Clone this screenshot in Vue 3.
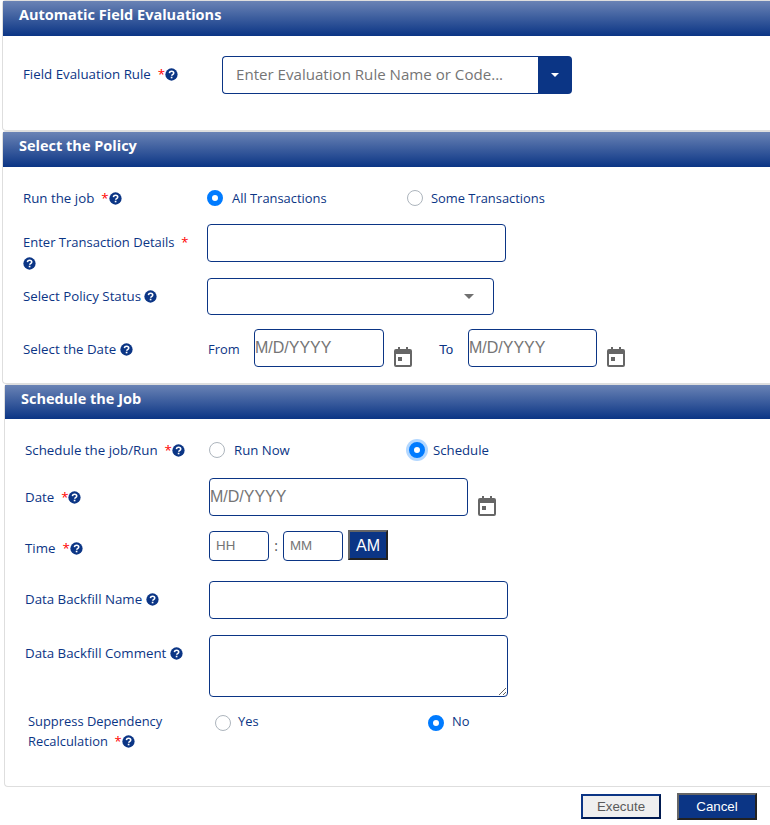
<template>
  <div class="page">
    <!-- shared icons -->
    <svg class="defs" width="0" height="0" aria-hidden="true">
      <symbol id="help" viewBox="0 0 14 14">
        <circle cx="7" cy="7" r="6.6" fill="#0b3585" />
        <path d="M4.7 5.4C4.9 4.2 5.8 3.5 7.1 3.5c1.3 0 2.3.8 2.3 1.9 0 .9-.5 1.3-1.2 1.7-.6.4-.9.7-.9 1.3" fill="none" stroke="#fff" stroke-width="1.7" />
        <rect x="6.2" y="9.4" width="1.8" height="1.7" fill="#fff" />
      </symbol>
      <symbol id="cal" viewBox="0 0 18 20">
        <path d="M4 0h2v2h6V0h2v2h2a2 2 0 0 1 2 2v14a2 2 0 0 1-2 2H2a2 2 0 0 1-2-2V4a2 2 0 0 1 2-2h2z M2 7v11h14V7z" fill="#666" fill-rule="evenodd" />
        <rect x="4" y="10" width="4" height="4" fill="#666" />
      </symbol>
    </svg>

    <!-- Automatic Field Evaluations -->
    <section class="card card-one">
      <h2 class="card-title">Automatic Field Evaluations</h2>
      <div class="card-body">
        <div class="row row-center">
          <label class="label label-rule">Field Evaluation Rule&nbsp; <span class="req">*</span><svg class="help"><use href="#help" /></svg></label>
          <div class="combo">
            <input class="combo-input" type="text" placeholder="Enter Evaluation Rule Name or Code..." />
            <span class="combo-btn"><i class="caret"></i></span>
          </div>
        </div>
      </div>
    </section>

    <!-- Select the Policy -->
    <section class="card card-two">
      <h2 class="card-title">Select the Policy</h2>
      <div class="card-body">
        <div class="row row-center radio-row">
          <label class="label label-policy">Run the job&nbsp; <span class="req">*</span><svg class="help"><use href="#help" /></svg></label>
          <span class="radio-opt opt-wide"><i class="radio on"></i>All Transactions</span>
          <span class="radio-opt"><i class="radio tight"></i>Some Transactions</span>
        </div>
        <div class="row row-details">
          <label class="label label-policy label-wrap">Enter Transaction Details&nbsp; <span class="req">*</span> <svg class="help"><use href="#help" /></svg></label>
          <input class="field field-details" type="text" />
        </div>
        <div class="row row-center row-status">
          <label class="label label-policy">Select Policy Status <svg class="help"><use href="#help" /></svg></label>
          <div class="field select-box"><i class="caret caret-grey"></i></div>
        </div>
        <div class="row row-center row-dates">
          <label class="label label-policy">Select the Date <svg class="help"><use href="#help" /></svg></label>
          <span class="from">From</span>
          <input class="field date date-small" type="text" placeholder="M/D/YYYY" />
          <svg class="cal"><use href="#cal" /></svg>
          <span class="to">To</span>
          <input class="field date date-to" type="text" placeholder="M/D/YYYY" />
          <svg class="cal"><use href="#cal" /></svg>
        </div>
      </div>
    </section>

    <!-- Schedule the Job -->
    <section class="card card-three">
      <h2 class="card-title">Schedule the Job</h2>
      <div class="card-body">
        <div class="row row-center radio-row">
          <label class="label label-job">Schedule the job/Run&nbsp; <span class="req">*</span><svg class="help"><use href="#help" /></svg></label>
          <span class="radio-opt opt-wide opt-job"><i class="radio"></i>Run Now</span>
          <span class="radio-opt opt-job"><i class="radio on focus"></i>Schedule</span>
        </div>
        <div class="row row-center row-date">
          <label class="label label-job">Date&nbsp; <span class="req">*</span><svg class="help"><use href="#help" /></svg></label>
          <input class="field date date-large" type="text" placeholder="M/D/YYYY" />
          <svg class="cal"><use href="#cal" /></svg>
        </div>
        <div class="row row-time">
          <label class="label label-job label-time">Time&nbsp; <span class="req">*</span><svg class="help"><use href="#help" /></svg></label>
          <input class="field time" type="text" placeholder="HH" />
          <span class="colon">:</span>
          <input class="field time" type="text" placeholder="MM" />
          <button class="btn-am" type="button">AM</button>
        </div>
        <div class="row row-center row-name">
          <label class="label label-job label-name">Data Backfill Name <svg class="help"><use href="#help" /></svg></label>
          <input class="field field-name" type="text" />
        </div>
        <div class="row row-comment">
          <label class="label label-job label-comment">Data Backfill Comment <svg class="help"><use href="#help" /></svg></label>
          <textarea class="field comment"></textarea>
        </div>
        <div class="row row-suppress">
          <div class="label label-suppress">
            <span class="line">Suppress Dependency</span>
            <span class="line">Recalculation&nbsp; <span class="req">*</span><svg class="help"><use href="#help" /></svg></span>
          </div>
          <span class="radio-opt opt-yes"><i class="radio"></i>Yes</span>
          <span class="radio-opt"><i class="radio on tight"></i>No</span>
        </div>
      </div>
    </section>

    <div class="actions">
      <button class="btn-execute" type="button">Execute</button>
      <button class="btn-cancel" type="button">Cancel</button>
    </div>
  </div>
</template>

<script setup>
</script>

<style>
html,
body {
  margin: 0;
  background: #fff;
  overflow: hidden;
}
</style>

<style scoped>
.page {
  width: 770px;
  height: 825px;
  overflow: hidden;
  font-family: "Open Sans", "Noto Sans", sans-serif;
  font-size: 12.9px;
  color: #0b3585;
}

.defs {
  position: absolute;
}

/* --- Cards --- */
.card {
  box-sizing: border-box;
  border: 1px solid #dedede;
  border-right: none;
  border-radius: 4px 0 0 4px;
}

.card-one {
  margin-left: 2px;
  height: 131px;
}

.card-two {
  margin-left: 2px;
  height: 253px;
}

.card-three {
  margin-left: 4px;
  height: 403px;
}

.card-title {
  margin: 0;
  height: 35px;
  box-sizing: border-box;
  padding: 4px 0 0 16px;
  font-size: 14.5px;
  line-height: 19px;
  font-weight: 700;
  color: #fff;
  background: linear-gradient(#6a83b5, #0b3585);
}

.card-three .card-title {
  height: 34px;
}

.card-body {
  padding: 20px 0 0 20px;
}

/* --- Rows --- */
.row {
  display: flex;
}

.row-center {
  align-items: center;
}

.label {
  display: block;
  flex: none;
  line-height: 21px;
  font-size: 13.3px;
}

.label-rule {
  width: 199px;
  padding-bottom: 2px;
}

.label-policy {
  width: 184px;
}

.label-job {
  width: 184px;
}

.label-wrap {
  padding-top: 8px;
  padding-right: 10px;
  box-sizing: border-box;
  font-size: 13px;
}

.label-name {
  padding-bottom: 2px;
}

.req {
  color: #f00;
}

.help {
  width: 13px;
  height: 13px;
  vertical-align: -2px;
}

.radio-row {
  height: 22px;
}

.radio-opt {
  display: flex;
  align-items: center;
  line-height: 21px;
}

.opt-wide {
  width: 200px;
}

.opt-job {
  font-size: 13.2px;
}

.radio {
  box-sizing: border-box;
  width: 16px;
  height: 16px;
  margin-right: 9px;
  border: 1px solid #adb5bd;
  border-radius: 50%;
  background: #fff;
}

.radio.tight {
  margin-right: 8px;
}

.radio.on {
  border: 5px solid #007bff;
}

.radio.focus {
  box-shadow: 0 0 0 3px rgba(0, 123, 255, 0.3);
  margin-right: 8px;
}

/* --- Inputs --- */
.field {
  box-sizing: border-box;
  height: 38px;
  padding: 0;
  border: 1px solid #0b3585;
  border-radius: 4px;
  background: #fff;
  outline: none;
}

input::placeholder {
  color: #757575;
  opacity: 1;
}

.combo {
  display: flex;
  width: 350px;
  height: 38px;
}

.combo-input {
  flex: 1;
  min-width: 0;
  box-sizing: border-box;
  padding: 0 13px 2px;
  border: 1px solid #0b3585;
  border-right: none;
  border-radius: 4px 0 0 4px;
  font-family: inherit;
  font-size: 15.1px;
  outline: none;
}

.combo-btn {
  display: flex;
  width: 34px;
  align-items: center;
  justify-content: center;
  background: #0b3585;
  border-radius: 0 4px 4px 0;
}

.caret {
  width: 0;
  height: 0;
  border-left: 4px solid transparent;
  border-right: 4px solid transparent;
  border-top: 4px solid #fff;
}

.caret-grey {
  border-left-width: 5px;
  border-right-width: 5px;
  border-top: 5px solid #707070;
}

.row-details {
  margin-top: 15px;
}

.field-details {
  width: 299px;
}

.row-status {
  margin-top: 4px;
}

.select-box {
  display: flex;
  align-items: center;
  justify-content: flex-end;
  width: 287px;
  height: 37px;
  padding-right: 19px;
}

.row-dates {
  margin-top: 14px;
}

.row-dates .label {
  padding-top: 2px;
}

.from {
  width: 46px;
  padding: 2px 0 0 1px;
}

.to {
  width: 29px;
  margin-left: 27px;
  padding-top: 2px;
  font-family: "Liberation Sans", sans-serif;
  font-size: 13.33px;
}

.date {
  padding: 0;
  font-family: "Liberation Sans", sans-serif;
  font-size: 16px;
}

.date-small {
  width: 130px;
}

.date-to {
  width: 129px;
}

.date-large {
  width: 259px;
}

.cal {
  width: 18px;
  height: 20px;
  margin-left: 10px;
  align-self: flex-end;
  flex: none;
}

.row-date {
  margin-top: 17px;
}

.row-time {
  margin-top: 14px;
  height: 31px;
  align-items: flex-start;
}

.label-time {
  padding-top: 8px;
}

.time {
  width: 60px;
  height: 30px;
  margin-top: 1px;
  padding: 0 0 2px 6px;
  font-family: "Liberation Sans", sans-serif;
  font-size: 13.33px;
}

.colon {
  width: 14px;
  margin-top: 1px;
  text-align: center;
  font-size: 14px;
  line-height: 30px;
  color: #555;
}

.btn-am {
  box-sizing: border-box;
  width: 40px;
  height: 30px;
  margin-left: 5px;
  padding: 2px 0 0;
  border: 2px solid;
  border-color: #666 #222 #222 #666;
  background: #0b3585;
  color: #fff;
  font-family: "Liberation Sans", sans-serif;
  font-size: 16px;
}

.row-name {
  margin-top: 20px;
}

.field-name {
  width: 299px;
}

.row-comment {
  margin-top: 16px;
  align-items: flex-start;
}

.label-comment {
  padding-top: 8px;
}

.comment {
  width: 299px;
  height: 62px;
  display: block;
}

.row-suppress {
  margin-top: 14px;
}

.label-suppress {
  width: 187px;
  margin-left: 3px;
  line-height: 20px;
  font-size: 12.9px;
  box-sizing: border-box;
}

.line {
  display: block;
}

.row-suppress .radio-opt {
  align-self: flex-start;
  height: 21px;
}

.row-suppress .radio {
  margin-right: 7px;
  margin-top: 2px;
}

.row-suppress .radio.tight {
  margin-right: 8px;
}

.opt-yes {
  width: 213px;
}

/* --- Footer buttons --- */
.actions {
  display: flex;
  justify-content: flex-end;
  align-items: center;
  gap: 16px;
  padding: 5px 13px 0 0;
  height: 28px;
}

.actions button {
  box-sizing: border-box;
  width: 80px;
  padding: 0;
  font-family: "Liberation Sans", sans-serif;
  font-size: 13.33px;
  border-width: 2px;
  border-style: solid;
}

.btn-execute {
  height: 25px;
  color: #5a5a5a;
  background: #efefef;
  border-color: #0b3585 #001a50 #001a50 #0b3585;
}

.btn-cancel {
  height: 27px;
  color: #fff;
  background: #0b3585;
  border-color: #666 #222 #222 #666;
}
</style>
